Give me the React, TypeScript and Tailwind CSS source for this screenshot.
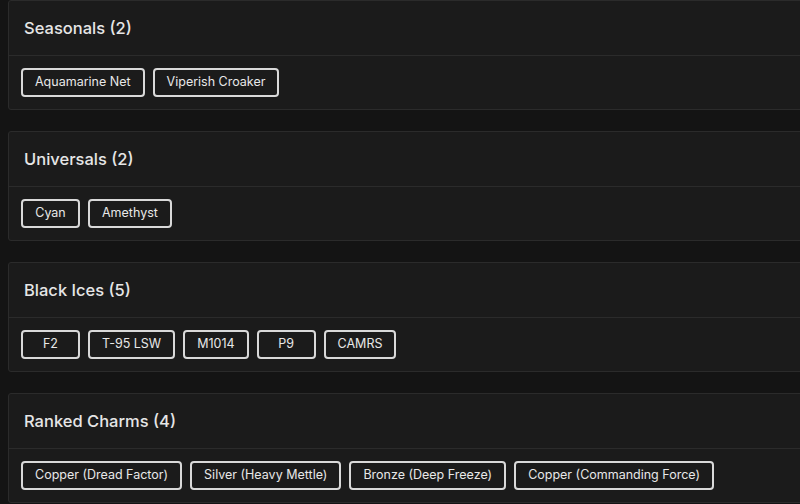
import React from 'react';

const SECTIONS = [
  { title: 'Seasonals', items: ['Aquamarine Net', 'Viperish Croaker'] },
  { title: 'Universals', items: ['Cyan', 'Amethyst'] },
  { title: 'Black Ices', items: ['F2', 'T-95 LSW', 'M1014', 'P9', 'CAMRS'] },
  {
    title: 'Ranked Charms',
    items: ['Copper (Dread Factor)', 'Silver (Heavy Mettle)', 'Bronze (Deep Freeze)', 'Copper (Commanding Force)'],
  },
];

const App: React.FC = () => {
  return (
    <div
      className="w-[800px] h-[504px] overflow-hidden bg-[#141414] text-[#e4e4e4]"
      style={{ fontFamily: 'Inter, "Noto Sans", sans-serif' }}
    >
      <div className="flex flex-col gap-[21px] pl-2">
        {SECTIONS.map((sec, idx) => (
          <div key={idx} className="w-[808px] bg-[#1b1b1b] border border-[#2b2b2b] rounded-[3px]">
            {/* Header */}
            <div className="h-[55px] flex items-center px-[15px] border-b border-[#2b2b2b]">
              <h2 className="text-[16.5px] font-medium text-[#e6e6e6]">
                {sec.title} ({sec.items.length})
              </h2>
            </div>
            {/* Items */}
            <div className="h-[53px] flex items-center gap-2 px-3">
              {sec.items.map((item, i) => (
                <span
                  key={i}
                  className="h-[29px] min-w-[59px] px-[12px] flex items-center justify-center border-2 border-[#d9d9d9] rounded-[4px] bg-[#1b1b1b] text-[12.5px] text-[#e8e8e8]"
                >
                  {item}
                </span>
              ))}
            </div>
          </div>
        ))}
      </div>
    </div>
  );
};

export default App;
